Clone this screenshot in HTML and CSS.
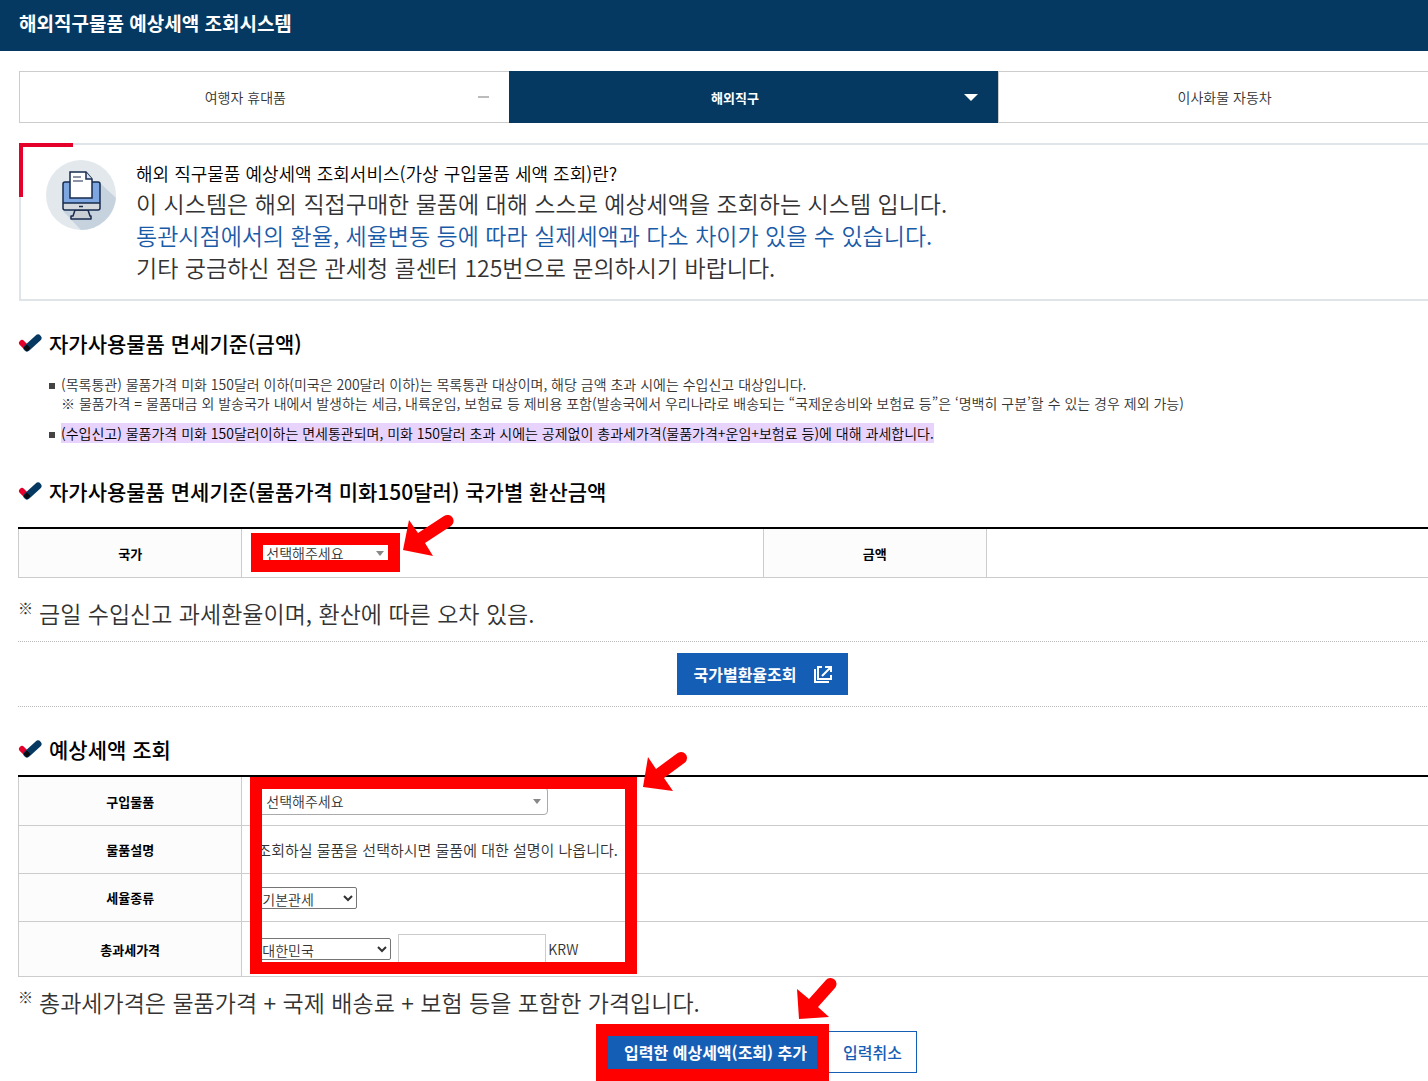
FILE: index.html
```html
<!DOCTYPE html>
<html lang="ko">
  <head>
    <meta charset="UTF-8" />
    <meta name="viewport" content="width=device-width, initial-scale=1.0" />
    <title>해외직구물품 예상세액 조회시스템</title>
    <link rel="stylesheet" href="styles.css">
  </head>
  <body>
    <svg class="defs" width="0" height="0" aria-hidden="true">
      <symbol id="check" viewBox="0 0 24 18">
        <path d="M4 9l5 5" stroke="#e4002b" stroke-width="6" stroke-linecap="round" />
        <path d="M9 14L20 4" stroke="#053961" stroke-width="7" stroke-linecap="round" />
        <path d="M6 14l3-3 3 3-3 3z" fill="#0b0b14" stroke="#0b0b14" stroke-linejoin="round" />
      </symbol>
    </svg>

    <header class="top">
      <h1>해외직구물품 예상세액 조회시스템</h1>
    </header>

    <main class="wrap">
      <nav class="tabs">
        <a href="#traveler">여행자 휴대품<span class="dash"></span></a>
        <a href="#direct" class="active">해외직구<span class="caret"></span></a>
        <a href="#moving">이사화물 자동차</a>
      </nav>

      <section class="info">
        <svg class="info-icon" width="70" height="70" viewBox="0 0 70 70" aria-hidden="true">
          <circle cx="35" cy="35" r="35" fill="#e2e8ec" />
          <path d="M54 23L70 38A35 35 0 0 1 35 70L17 51z" fill="#c6d3df" />
          <path d="M29 50h13l2 6h1v3H25v-3h2z" fill="#c9ced4" stroke="#172b4d" stroke-width="1.5" stroke-linejoin="round" />
          <rect x="17" y="22" width="37" height="28" rx="2" fill="#7ea6e0" />
          <path d="M17 43h37v5a2 2 0 0 1-2 2H19a2 2 0 0 1-2-2z" fill="#d5d8dc" />
          <rect x="17" y="22" width="37" height="28" rx="2" fill="none" stroke="#172b4d" stroke-width="1.5" />
          <path d="M17 43h37M33 46.5h4" stroke="#172b4d" stroke-width="1.5" />
          <path d="M24 12h16l6 7v19H24z" fill="#fff" stroke="#172b4d" stroke-width="1.5" />
          <path d="M40 12v7h6" fill="#d5e2f2" stroke="#172b4d" stroke-width="1.5" />
          <path d="M27 17h8M27 21h10" stroke="#172b4d" stroke-width="1.2" />
        </svg>
        <div class="info-text">
          <strong>해외 직구물품 예상세액 조회서비스(가상 구입물품 세액 조회)란?</strong>
          <p>이 시스템은 해외 직접구매한 물품에 대해 스스로 예상세액을 조회하는 시스템 입니다.</p>
          <p class="blue">통관시점에서의 환율, 세율변동 등에 따라 실제세액과 다소 차이가 있을 수 있습니다.</p>
          <p>기타 궁금하신 점은 관세청 콜센터 125번으로 문의하시기 바랍니다.</p>
        </div>
      </section>

      <h2><svg class="check"><use href="#check" /></svg>자가사용물품 면세기준(금액)</h2>
      <ul class="rules">
        <li>
          (목록통관) 물품가격 미화 150달러 이하(미국은 200달러 이하)는 목록통관 대상이며, 해당 금액 초과 시에는 수입신고 대상입니다.<br />
          ※ 물품가격 = 물품대금 외 발송국가 내에서 발생하는 세금, 내륙운임, 보험료 등 제비용 포함(발송국에서 우리나라로 배송되는 “국제운송비와 보험료 등”은 ‘명백히 구분’할 수 있는 경우 제외 가능)
        </li>
        <li><mark>(수입신고) 물품가격 미화 150달러이하는 면세통관되며, 미화 150달러 초과 시에는 공제없이 총과세가격(물품가격+운임+보험료 등)에 대해 과세합니다.</mark></li>
      </ul>

      <h2 class="country-title"><svg class="check"><use href="#check" /></svg>자가사용물품 면세기준(물품가격 미화150달러) 국가별 환산금액</h2>
      <div class="table-box country-box">
        <table>
          <tr>
            <th><label for="country">국가</label></th>
            <td>
              <span class="picker short"><select id="country"><option>선택해주세요</option></select></span>
            </td>
            <th>금액</th>
            <td></td>
          </tr>
        </table>
        <div class="frame frame-country"></div>
        <svg class="arrow arrow-country" width="52" height="44" aria-hidden="true">
          <path d="M1 36L7 6l9 13L42 2a6 6 0 0 1 7 10L23 29l8 13z" />
        </svg>
      </div>
      <p class="note"><span>※</span>금일 수입신고 과세환율이며, 환산에 따른 오차 있음.</p>

      <div class="rate">
        <button type="button" class="btn">
          국가별환율조회
          <svg width="18" height="19" viewBox="0 0 18 19" fill="none" stroke="#fff" stroke-width="2" aria-hidden="true">
            <path d="M8 2H4v12h13v-4M11 2h6v5M17 2L8 11M1 4v13h14" />
          </svg>
        </button>
      </div>

      <h2><svg class="check"><use href="#check" /></svg>예상세액 조회</h2>
      <form>
        <div class="table-box tax-box">
          <table>
            <tr class="item">
              <th><label for="item">구입물품</label></th>
              <td>
                <span class="picker"><select id="item"><option>선택해주세요</option></select></span>
              </td>
            </tr>
            <tr>
              <th>물품설명</th>
              <td>조회하실 물품을 선택하시면 물품에 대한 설명이 나옵니다.</td>
            </tr>
            <tr>
              <th><label for="rate">세율종류</label></th>
              <td>
                <select id="rate" class="plain rate-type"><option>기본관세</option></select>
              </td>
            </tr>
            <tr class="price">
              <th><label for="price">총과세가격</label></th>
              <td>
                <div class="price-row">
                  <select class="plain nation" aria-label="국가 선택"><option>대한민국</option></select>
                  <input type="text" id="price" />
                  <span>KRW</span>
                </div>
              </td>
            </tr>
          </table>
          <div class="frame frame-tax"></div>
          <svg class="arrow arrow-tax" width="48" height="44" aria-hidden="true">
            <path d="M1 37L6 7l8 12L35 3.5a6 6 0 0 1 8 9L22 28l9 13z" />
          </svg>
        </div>
        <p class="note total-note"><span>※</span>총과세가격은 물품가격 + 국제 배송료 + 보험 등을 포함한 가격입니다.</p>

        <div class="actions">
          <div class="add">
            <button type="button" class="btn">입력한 예상세액(조회) 추가</button>
            <div class="frame frame-add"></div>
            <svg class="arrow arrow-add" width="42" height="46" aria-hidden="true">
              <path d="M3 42L1 12l12 10L30 3a6 6 0 0 1 9 8L22 30l11 10z" />
            </svg>
          </div>
          <button type="reset" class="btn line">입력취소</button>
        </div>
      </form>
    </main>
  </body>
</html>
```
FILE: styles.css
```css
*,
*::before {
  box-sizing: border-box;
}

body {
  margin: 0;
  overflow-x: hidden;
  background: #fff;
  color: #333;
  font-family: "Noto Sans CJK KR", sans-serif;
  font-size: 15px;
}

h1,
h2,
p,
ul {
  margin: 0;
  padding: 0;
}

.defs {
  position: absolute;
}

.top {
  height: 51px;
  padding: 8px 19px;
  background: #053961;
}

.top h1 {
  color: #fff;
  font-size: 19px;
  font-weight: 700;
  line-height: 30px;
}

/* the sheet is wider than the window and runs off its right side */
.wrap {
  margin: 20px -79px 0 18px;
}

.tabs {
  display: grid;
  grid-template-columns: repeat(3, 1fr);
  margin: 0 19px 20px 1px;
}

.tabs a {
  display: flex;
  align-items: center;
  justify-content: center;
  position: relative;
  height: 52px;
  padding-right: 38px;
  border: 1px solid #ccc;
  border-right: 0;
  color: #333;
  font-size: 14px;
  font-weight: 350;
  text-decoration: none;
}

.tabs a.active {
  border-color: #053961;
  background: #053961;
  color: #fff;
  font-size: 13px;
  font-weight: 700;
}

.dash,
.caret {
  position: absolute;
  right: 20px;
}

.dash {
  width: 11px;
  height: 2px;
  background: #bbb;
}

.caret {
  border: 7px solid transparent;
  border-top-color: #fff;
  border-bottom: 0;
}

.info {
  display: flex;
  gap: 20px;
  position: relative;
  margin-left: 1px;
  padding: 15px 25px 16px;
  border: 2px solid #dfe4e9;
}

.info::before {
  content: "";
  position: absolute;
  top: -2px;
  left: -2px;
  width: 54px;
  height: 54px;
  border-top: 4px solid #e4002b;
  border-left: 4px solid #e4002b;
}

.info strong {
  display: block;
  color: #000;
  font-size: 18px;
  font-weight: 350;
  line-height: 27px;
}

.info p {
  font-size: 23px;
  font-weight: 350;
  line-height: 32px;
}

.info .blue {
  color: #1a5ba8;
}

h2 {
  display: flex;
  align-items: center;
  gap: 7px;
  margin-top: 27px;
  color: #000;
  font-size: 21px;
  font-weight: 500;
  line-height: 30px;
}

.check {
  width: 24px;
  height: 18px;
}

.rules {
  margin: 17px 0 0 31px;
  list-style: none;
}

.rules li {
  position: relative;
  margin-bottom: 11px;
  padding-left: 12px;
  font-size: 14px;
  font-weight: 350;
  line-height: 19px;
  white-space: nowrap;
}

.rules li::before {
  content: "";
  position: absolute;
  top: 8px;
  left: 0;
  width: 6px;
  height: 6px;
  background: #444;
}

mark {
  background: #e8d3fc;
  color: #000;
}

.country-title {
  margin-top: 33px;
}

.table-box {
  position: relative;
}

.country-box {
  margin-top: 21px;
}

.tax-box {
  margin-top: 11px;
}

table {
  width: 100%;
  border-top: 2px solid #000;
  border-spacing: 0;
  table-layout: fixed;
}

th,
td {
  height: 48px;
  padding: 0 15px;
  border-bottom: 1px solid #ccc;
  border-left: 1px solid #ccc;
  text-align: left;
}

th {
  width: 15%;
  background: #fcfcfc;
  color: #000;
  font-size: 13px;
  font-weight: 700;
  text-align: center;
}

td {
  font-weight: 350;
}

.country-box td,
.country-box th,
.item td,
.item th {
  height: 49px;
}

.price td,
.price th {
  height: 55px;
}

select,
input {
  border: 1px solid #ccc;
  background: #fff;
  color: #333;
  font: inherit;
  font-size: 14px;
}

.picker {
  display: block;
  position: relative;
  width: 291px;
}

.picker::after {
  content: "";
  position: absolute;
  top: 12px;
  right: 7px;
  border: 4px solid transparent;
  border-top: 5px solid #888;
  border-bottom: 0;
}

.picker.short {
  width: 134px;
}

.picker select {
  appearance: none;
  display: block;
  width: 100%;
  height: 28px;
  padding: 0 8px;
  border-color: #aaa;
  border-radius: 4px;
}

.plain {
  display: block;
  height: 22px;
  padding: 0;
  border-color: #767676;
  border-radius: 2px;
}

.rate-type {
  width: 100px;
}

.nation {
  width: 134px;
  margin-right: 7px;
}

.price-row {
  display: flex;
  align-items: center;
}

.price-row input {
  width: 148px;
  height: 30px;
  margin-right: 2px;
}

.price-row span {
  font-size: 14px;
}

.note {
  display: flex;
  gap: 6px;
  margin-top: 18px;
  font-size: 23px;
  font-weight: 350;
  line-height: 34px;
}

.note span {
  font-size: 15px;
  line-height: 24px;
}

.total-note {
  margin-top: 8px;
}

.rate {
  margin-top: 11px;
  padding: 11px 0;
  border-top: 1px dotted #bbb;
  border-bottom: 1px dotted #bbb;
}

.btn {
  display: flex;
  align-items: center;
  gap: 17px;
  height: 42px;
  margin: 0 auto;
  padding: 0 15px;
  border: 1px solid #155eb6;
  background: #155eb6;
  color: #fff;
  font-family: inherit;
  font-size: 16px;
  font-weight: 700;
}

.btn.line {
  margin: 0;
  padding: 0 14px;
  background: #fff;
  color: #155eb6;
  font-weight: 500;
}

.actions {
  display: flex;
  justify-content: center;
  gap: 5px;
  margin: 12px 0 8px;
}

.add {
  position: relative;
}

/* red guide marks drawn over the form */
.frame {
  position: absolute;
  border: 12px solid #f00;
  pointer-events: none;
}

.arrow {
  position: absolute;
  fill: #f00;
  pointer-events: none;
}

.frame-country {
  top: 6px;
  left: 233px;
  width: 149px;
  height: 39px;
}

.arrow-country {
  top: -13px;
  left: 384px;
}

.frame-tax {
  top: 2px;
  left: 232px;
  width: 387px;
  height: 197px;
}

.arrow-tax {
  top: -25px;
  left: 624px;
}

.frame-add {
  top: -7px;
  left: -12px;
  right: -6px;
  height: 57px;
}

.arrow-add {
  top: -54px;
  right: -15px;
}
```
